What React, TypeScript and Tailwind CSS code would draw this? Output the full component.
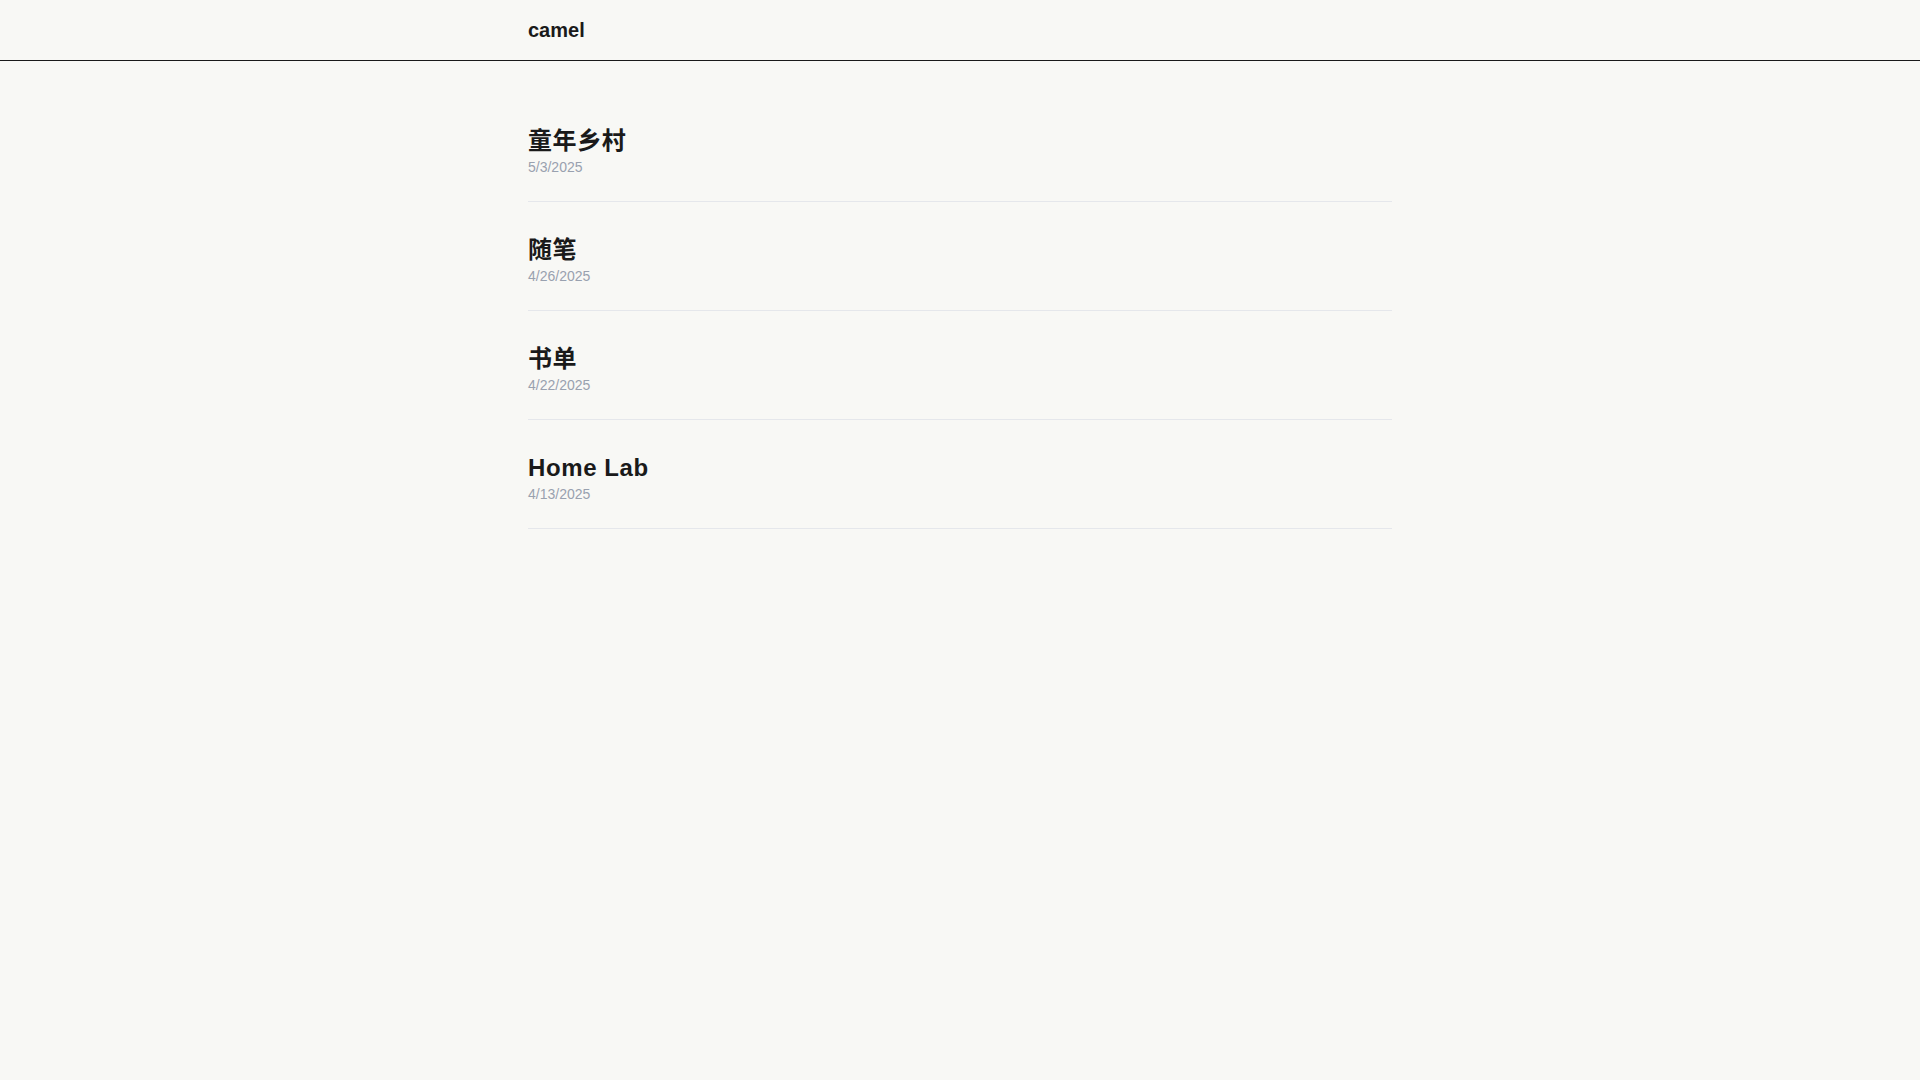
import React from 'react'

interface Post {
  title: string
  date: string
}

const posts: Post[] = [
  { title: '童年乡村', date: '5/3/2025' },
  { title: '随笔', date: '4/26/2025' },
  { title: '书单', date: '4/22/2025' },
  { title: 'Home Lab', date: '4/13/2025' },
]

function PostItem({ post }: { post: Post }) {
  return (
    <li className="border-b border-[#e5e7eb] pt-8 pb-6">
      <a href="#" className="block">
        <h2 className="text-2xl leading-8 font-bold tracking-wide text-[#1a1a1a]">{post.title}</h2>
        <p className="text-sm leading-5 text-[#99a1af]">{post.date}</p>
      </a>
    </li>
  )
}

export default function App() {
  return (
    <div
      className="min-h-screen bg-[#f8f8f5] text-[#1a1a1a]"
      style={{ fontFamily: '"Liberation Sans", Arial, "Noto Sans CJK SC", sans-serif' }}
    >
      <header className="h-[61px] border-b border-[#1a1a1a]">
        <div className="mx-auto flex h-full w-[864px] items-center">
          <a href="#" className="text-xl leading-7 font-bold">camel</a>
        </div>
      </header>

      <main className="mx-auto w-[864px] pt-8">
        <ul>
          {posts.map((p) => (
            <PostItem key={p.date} post={p} />
          ))}
        </ul>
      </main>
    </div>
  )
}
